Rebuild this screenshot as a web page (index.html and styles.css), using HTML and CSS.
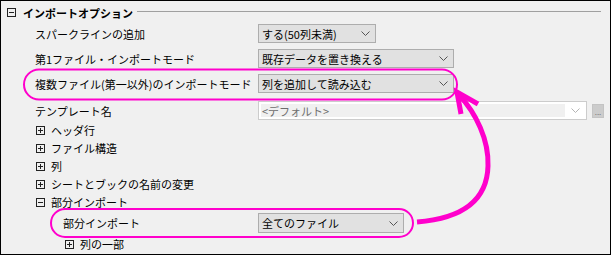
FILE: index.html
```html
<!DOCTYPE html>
<html lang="ja">
<head>
  <meta charset="UTF-8">
  <title>インポートオプション</title>
  <link rel="stylesheet" href="styles.css">
</head>
<body>

  <div class="panel">
    <div class="group-head">
      <svg class="box" width="9" height="9" viewBox="0 0 9 9"><rect x=".5" y=".5" width="8" height="8" fill="none" stroke="#222"/><path d="M2 4.5h5" stroke="#222"/></svg>
      <span class="group-title">インポートオプション</span>
      <span class="group-rule"></span>
    </div>

    <div class="row first">
      <span class="label">スパークラインの追加</span>
      <div class="combo w-short">
        <span class="combo-text">する(50列未満)</span>
        <svg class="chev" width="9" height="5" viewBox="0 0 9 5"><path d="M.5 .5l4 4 4-4" fill="none" stroke="#555"/></svg>
      </div>
    </div>

    <div class="row">
      <span class="label">第1ファイル・インポートモード</span>
      <div class="combo w-mid">
        <span class="combo-text">既存データを置き換える</span>
        <svg class="chev" width="9" height="5" viewBox="0 0 9 5"><path d="M.5 .5l4 4 4-4" fill="none" stroke="#555"/></svg>
      </div>
    </div>

    <div class="row">
      <span class="label">複数ファイル(第一以外)のインポートモード</span>
      <div class="combo w-mid">
        <span class="combo-text">列を追加して読み込む</span>
        <svg class="chev" width="9" height="5" viewBox="0 0 9 5"><path d="M.5 .5l4 4 4-4" fill="none" stroke="#555"/></svg>
      </div>
    </div>

    <div class="row row-wide">
      <span class="label">テンプレート名</span>
      <div class="combo combo-off w-long">
        <span class="combo-field">&lt;デフォルト&gt;</span>
        <svg class="chev" width="9" height="5" viewBox="0 0 9 5"><path d="M.5 .5l4 4 4-4" fill="none" stroke="#b4b4b4"/></svg>
      </div>
      <span class="more">...</span>
    </div>

    <div class="node first-node">
      <svg class="box" width="9" height="9" viewBox="0 0 9 9"><rect x=".5" y=".5" width="8" height="8" fill="none" stroke="#222"/><path d="M2 4.5h5M4.5 2v5" stroke="#222"/></svg>
      <span>ヘッダ行</span>
    </div>
    <div class="node">
      <svg class="box" width="9" height="9" viewBox="0 0 9 9"><rect x=".5" y=".5" width="8" height="8" fill="none" stroke="#222"/><path d="M2 4.5h5M4.5 2v5" stroke="#222"/></svg>
      <span>ファイル構造</span>
    </div>
    <div class="node">
      <svg class="box" width="9" height="9" viewBox="0 0 9 9"><rect x=".5" y=".5" width="8" height="8" fill="none" stroke="#222"/><path d="M2 4.5h5M4.5 2v5" stroke="#222"/></svg>
      <span>列</span>
    </div>
    <div class="node">
      <svg class="box" width="9" height="9" viewBox="0 0 9 9"><rect x=".5" y=".5" width="8" height="8" fill="none" stroke="#222"/><path d="M2 4.5h5M4.5 2v5" stroke="#222"/></svg>
      <span>シートとブックの名前の変更</span>
    </div>
    <div class="node">
      <svg class="box" width="9" height="9" viewBox="0 0 9 9"><rect x=".5" y=".5" width="8" height="8" fill="none" stroke="#222"/><path d="M2 4.5h5" stroke="#222"/></svg>
      <span>部分インポート</span>
    </div>

    <div class="row sub-row">
      <span class="label">部分インポート</span>
      <div class="combo w-part">
        <span class="combo-text">全てのファイル</span>
        <svg class="chev" width="9" height="5" viewBox="0 0 9 5"><path d="M.5 .5l4 4 4-4" fill="none" stroke="#555"/></svg>
      </div>
    </div>

    <div class="node node-sub">
      <svg class="box" width="9" height="9" viewBox="0 0 9 9"><rect x=".5" y=".5" width="8" height="8" fill="none" stroke="#222"/><path d="M2 4.5h5M4.5 2v5" stroke="#222"/></svg>
      <span>列の一部</span>
    </div>

    <!-- annotation marks drawn over the dialog -->
    <svg class="marks" width="611" height="255" viewBox="0 0 611 255">
      <rect x="24" y="69.5" width="433" height="30" rx="15" fill="none" stroke="#ff00cc" stroke-width="2"/>
      <rect x="51" y="209" width="362" height="28" rx="14" fill="none" stroke="#ff00cc" stroke-width="2"/>
      <path d="M417 222 C455 219 487 205 488 166 C489 140 476 113 459 95" fill="none" stroke="#ff00cc" stroke-width="5"/>
      <path d="M461 114 L457 92 L478 104" fill="none" stroke="#ff00cc" stroke-width="5"/>
    </svg>
  </div>

</body>
</html>
```

FILE: styles.css
```css
* {
  box-sizing: border-box;
}
body {
  margin: 0;
  font-family: "Noto Sans CJK JP", "Noto Sans", sans-serif;
  font-size: 11px;
  color: #000;
}
.panel {
  position: relative;
  width: 611px;
  height: 255px;
  border: 1px solid #000;
  background: #f0f0f0;
  overflow: hidden;
}
.group-head {
  display: flex;
  align-items: center;
  height: 23px;
  padding-left: 6px;
}
.box {
  flex: none;
  display: block;
}
.group-title {
  font-weight: bold;
  margin-left: 7px;
  white-space: nowrap;
}
.group-rule {
  flex: 1;
  align-self: flex-start;
  height: 1px;
  margin: 10px 9px 0 4px;
  background: #a0a0a0;
}
.row {
  display: flex;
  align-items: center;
  height: 19px;
  margin-top: 6px;
  padding-left: 34px;
}
.row.first {
  margin-top: 0;
}
.row-wide {
  margin-top: 8px;
}
.label {
  flex: none;
  width: 223px;
  white-space: nowrap;
}
.combo {
  display: flex;
  align-items: center;
  height: 19px;
  padding: 0 5px 0 3px;
  background: #e1e1e1;
  border: 1px solid #adadad;
}
.combo-text {
  flex: 1;
  white-space: nowrap;
}
.chev {
  flex: none;
  display: block;
}
.w-short {
  width: 118px;
}
.w-mid {
  width: 196px;
}
.w-long {
  width: 329px;
}
.w-part {
  width: 146px;
}
.combo-off {
  padding: 2px 6px 2px 2px;
  background: #fff;
  border-color: #cccccc;
}
.combo-field {
  flex: 1;
  height: 100%;
  display: flex;
  align-items: center;
  padding-left: 1px;
  margin-right: 6px;
  background: #f0f0f0;
  color: #6d6d6d;
  white-space: nowrap;
}
.more {
  flex: none;
  width: 12px;
  height: 14px;
  margin-left: 5px;
  background: #cccccc;
  border: 1px solid #c4c4c4;
  color: #7a7a7a;
  font-size: 8px;
  line-height: 14px;
  text-align: center;
}
.node {
  display: flex;
  align-items: center;
  gap: 6px;
  height: 18px;
  padding-left: 35px;
  white-space: nowrap;
}
.first-node {
  margin-top: 1px;
}
.sub-row {
  height: 20px;
  margin-top: 2px;
  padding-left: 62px;
}
.sub-row .label {
  width: 195px;
}
.sub-row .combo {
  height: 20px;
}
.node-sub {
  margin-top: 2px;
  padding-left: 64px;
}
.marks {
  position: absolute;
  top: -1px;
  left: -1px;
  pointer-events: none;
}
```
